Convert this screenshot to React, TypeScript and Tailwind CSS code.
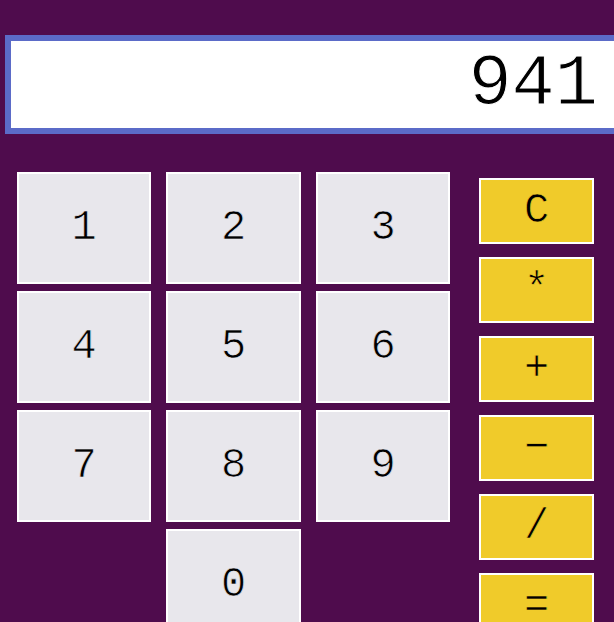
import React from 'react';

const digits = ['1', '2', '3', '4', '5', '6', '7', '8', '9'];
const ops = ['C', '*', '+', '−', '/', '='];

const App: React.FC = () => {
  return (
    <div
      className="h-[622px] w-[614px] overflow-hidden bg-[#4f0c4d] text-black"
      style={{ fontFamily: '"Liberation Mono", "Courier New", monospace' }}
    >
      <div className="pt-[35px] pl-[5px]">
        <div className="flex h-[99px] w-[640px] items-center justify-end border-[6px] border-[#5b6bc8] bg-white pr-[41px] text-[72px] leading-none [-webkit-text-stroke:1px_#ffffff]">
          941
        </div>
      </div>

      <div className="flex pt-[38px] pl-[17px]">
        <div className="grid grid-cols-[134px_135px_134px] gap-x-[15px] gap-y-[7px]">
          {digits.map((d) => (
            <button
              key={d}
              className="flex h-[112px] items-center justify-center border-2 border-white bg-[#e8e7ec] text-[42px] [-webkit-text-stroke:0.7px_#e8e7ec]"
            >
              {d}
            </button>
          ))}
          <button className="col-start-2 flex h-[112px] items-center justify-center border-2 border-white bg-[#e8e7ec] text-[42px] [-webkit-text-stroke:0.7px_#e8e7ec]">
            0
          </button>
        </div>

        <div className="ml-[29px] flex flex-col gap-[13px] pt-[6px]">
          {ops.map((o) => (
            <button
              key={o}
              className="flex h-[66px] w-[115px] items-center justify-center border-2 border-white bg-[#f0cb2a] text-[42px] [-webkit-text-stroke:0.7px_#f0cb2a]"
            >
              {o}
            </button>
          ))}
        </div>
      </div>
    </div>
  );
};

export default App;
